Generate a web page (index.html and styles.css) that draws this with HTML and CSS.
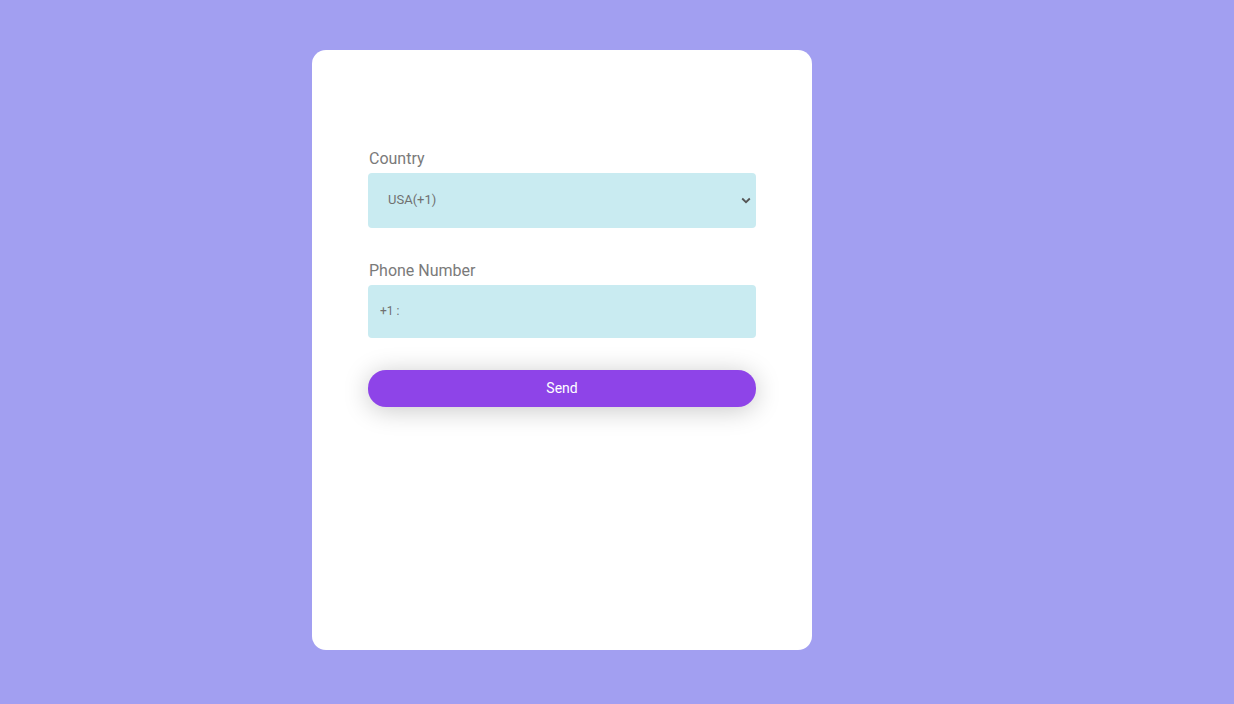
FILE: index.html
```html
<!DOCTYPE html>
<html lang="en">
<head>
<meta charset="utf-8">
<title>Phone form</title>
<link rel="stylesheet" href="styles.css">
</head>
<body>
<main class="page">
  <form class="card">
    <div class="field">
      <label class="label" for="country">Country</label>
      <div class="select-wrap">
        <select id="country" class="select">
          <option>USA(+1)</option>
        </select>
        <svg class="chevron" width="10" height="7" viewBox="0 0 10 7"><path d="M1.2 1.5 L5 5.2 L8.8 1.5" fill="none" stroke="#555" stroke-width="1.8"/></svg>
      </div>
    </div>
    <div class="field field-last">
      <label class="label" for="phone">Phone Number</label>
      <input id="phone" class="input" type="text" placeholder="+1 :">
    </div>
    <button type="button" class="btn">Send</button>
  </form>
</main>
</body>
</html>
```
FILE: styles.css
```css
* { box-sizing: border-box; }
html, body { margin: 0; padding: 0; }
body {
  background: #a29ff1;
  font-family: Roboto, "Liberation Sans", sans-serif;
  width: 1234px;
  height: 704px;
  overflow: hidden;
}
.page {
  padding: 50px 0 0 312px;
}
.card {
  width: 500px;
  height: 600px;
  background: #fff;
  border-radius: 14px;
  padding: 99px 56px 0 56px;
  display: flex;
  flex-direction: column;
}
.field {
  display: flex;
  flex-direction: column;
  margin-bottom: 33px;
}
.field-last {
  margin-bottom: 32px;
}
.label {
  font-size: 16px;
  line-height: 20px;
  color: #7a7a7a;
  padding-left: 1px;
  margin-bottom: 4px;
}
.select-wrap {
  position: relative;
}
.select {
  appearance: none;
  -webkit-appearance: none;
  width: 388px;
  height: 55px;
  border: none;
  border-radius: 4px;
  background: #c9ebf1;
  font-family: Roboto, "Liberation Sans", sans-serif;
  font-size: 13px;
  color: #707070;
  padding: 0 0 2px 20px;
  outline: none;
}
.chevron {
  position: absolute;
  right: 5px;
  top: 24px;
  pointer-events: none;
}
.input {
  width: 388px;
  height: 53px;
  border: none;
  border-radius: 4px;
  background: #c9ebf1;
  font-family: Roboto, "Liberation Sans", sans-serif;
  font-size: 12px;
  color: #707070;
  padding: 0 0 2px 12px;
  outline: none;
}
.input::placeholder { color: #707070; }
.btn {
  width: 388px;
  height: 37px;
  border: none;
  border-radius: 18px;
  background: #8e44e8;
  color: #fff;
  font-family: Roboto, "Liberation Sans", sans-serif;
  font-size: 14px;
  padding: 0 0 2px 0;
  box-shadow: 0 3px 26px rgba(0,0,0,0.22);
  cursor: pointer;
}
```
